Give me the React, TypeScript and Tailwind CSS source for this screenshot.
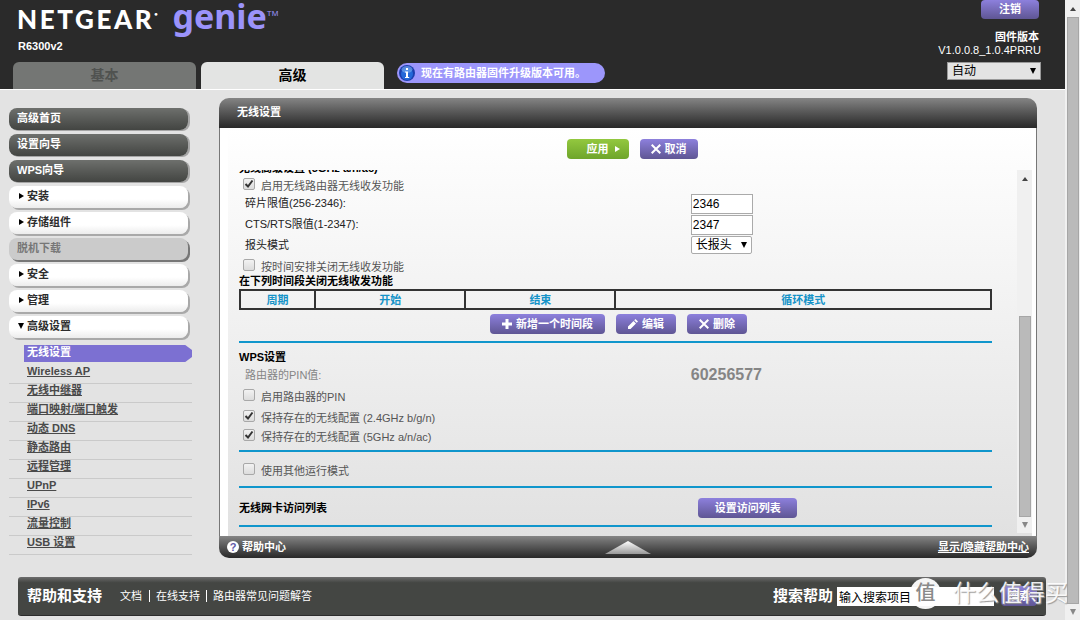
import { useState } from 'react'
import type { ReactNode } from 'react'
import clsx from 'clsx'

type MenuItem = {
  label: string
  kind: 'main' | 'group' | 'disabled'
  open?: boolean
}

const MENU: MenuItem[] = [
  { label: '高级首页', kind: 'main' },
  { label: '设置向导', kind: 'main' },
  { label: 'WPS向导', kind: 'main' },
  { label: '安装', kind: 'group' },
  { label: '存储组件', kind: 'group' },
  { label: '脱机下载', kind: 'disabled' },
  { label: '安全', kind: 'group' },
  { label: '管理', kind: 'group' },
  { label: '高级设置', kind: 'group', open: true },
]

const SUBMENU = [
  'Wireless AP',
  '无线中继器',
  '端口映射/端口触发',
  '动态 DNS',
  '静态路由',
  '远程管理',
  'UPnP',
  'IPv6',
  '流量控制',
  'USB 设置',
]

function Triangle({ dir, className }: { dir: 'up' | 'down' | 'right'; className?: string }) {
  const points = { up: '1,6 4,2 7,6', down: '1,1 7,1 4,7', right: '2,1 7,4 2,7' }[dir]
  return (
    <svg viewBox="0 0 8 8" className={clsx('size-2 shrink-0 fill-current', className)} aria-hidden="true">
      <polygon points={points} />
    </svg>
  )
}

function PurpleButton({ className, children }: { className?: string; children: ReactNode }) {
  return (
    <button
      type="button"
      className={clsx(
        'flex h-5 items-center justify-center gap-1 rounded-[4px] bg-gradient-to-b from-[#8d80dd] to-[#5f5694] font-bold whitespace-nowrap text-white',
        className,
      )}
    >
      {children}
    </button>
  )
}

function CrossIcon() {
  return (
    <svg viewBox="0 0 10 10" className="size-2.5" fill="none" stroke="currentColor" strokeWidth="2" aria-hidden="true">
      <path d="M.7.7 9.300 9.300M9.300.7.7 9.300" />
    </svg>
  )
}

function CheckRow({ label, defaultChecked, className }: { label: string; defaultChecked?: boolean; className?: string }) {
  return (
    <label className={clsx('flex gap-1.5 pl-1', className)}>
      <span className="relative block size-3 shrink-0">
        <input
          type="checkbox"
          defaultChecked={defaultChecked}
          className="peer block size-3 appearance-none rounded-xs border border-[#a8a8a8] bg-gradient-to-b from-[#f2f2f2] to-[#dcdcdc]"
        />
        <svg
          viewBox="0 0 12 12"
          className="pointer-events-none absolute inset-0 hidden size-3 peer-checked:block"
          fill="none"
          stroke="#333"
          strokeWidth="2"
          aria-hidden="true"
        >
          <path d="M2.500 6 5 8.500 9.500 2.500" />
        </svg>
      </span>
      <span className="pt-0.5 leading-3">{label}</span>
    </label>
  )
}

function Divider() {
  return <hr className="h-0.5 border-0 bg-[#1096cc]" />
}

function ScrollTrack({ thumb }: { thumb: string }) {
  return (
    <div className="flex w-[15px] shrink-0 flex-col items-center bg-[#f0f0f0]" aria-hidden="true">
      <div className="flex h-[17px] items-center text-[#444]">
        <Triangle dir="up" />
      </div>
      <div className="flex w-full flex-1 flex-col items-center">
        <div className={clsx('w-3 border border-[#a6a6a6] bg-[#bababa]', thumb)} />
      </div>
      <div className="flex h-4 items-center text-[#888]">
        <Triangle dir="down" />
      </div>
    </div>
  )
}

function Header() {
  const [tab, setTab] = useState('高级')

  return (
    <header className="flex justify-between border-b border-white bg-[#2a2a2a] pr-6 pl-[13px] text-white">
      <div>
        <div className="flex h-9 items-start pl-1">
          <span className="mr-3 pt-1 font-['Lato'] text-[26px] leading-[30px] font-black tracking-widest">
            NETGEAR<sup className="align-super text-[6px] leading-none">•</sup>
          </span>
          <span className="font-['Noto_Sans'] text-[34px] leading-[32px] font-bold text-[#9b93fb]">genie</span>
          <span className="pt-2 text-[8px] leading-3 text-[#9b93fb]">TM</span>
        </div>
        <div className="h-[26px] pt-1 pl-[5px] leading-3 font-bold">R6300v2</div>
        <div className="flex">
          <nav className="flex gap-[5px]">
            {['基本', '高级'].map((name) => (
              <button
                key={name}
                type="button"
                onClick={() => setTab(name)}
                className={clsx(
                  'h-[27px] w-[183px] rounded-t-md text-[14px] font-bold',
                  tab === name ? 'bg-[#e3e4e3] text-black' : 'bg-[#747674] text-[#505250]',
                )}
              >
                {name}
              </button>
            ))}
          </nav>
          <a
            href="#upgrade"
            className="mt-px ml-[13px] flex h-5 w-[208px] items-center gap-1.5 rounded-full bg-[#9c96fb] pl-0.5 font-bold"
          >
            <svg viewBox="0 0 16 16" className="size-4" aria-hidden="true">
              <circle cx="8" cy="8" r="8" fill="#1b3fae" />
              <circle cx="8" cy="9" r="6" fill="#2468d8" />
              <ellipse cx="8" cy="4.500" rx="5.500" ry="3.500" fill="#6fa4ee" opacity=".7" />
              <path d="M7 3h2v2H7zM6 6.500h3V12h1.200v1H6v-1h1V7.500H6z" fill="#fff" />
            </svg>
            现在有路由器固件升级版本可用。
          </a>
        </div>
      </div>

      <div className="flex flex-col items-end">
        <PurpleButton className="mr-0.5 h-[19px] w-[58px]">注销</PurpleButton>
        <div className="mt-3 mr-0.5 leading-[13px] font-bold">固件版本</div>
        <div className="leading-[13px]">V1.0.0.8_1.0.4PRRU</div>
        <div className="relative mt-[5px]">
          <select
            aria-label="语言"
            className="block h-[18px] w-[94px] appearance-none border border-[#999] bg-[#e3e3e3] px-1 text-[12px] leading-4 text-black"
          >
            <option>自动</option>
          </select>
          <Triangle dir="down" className="pointer-events-none absolute top-[5px] right-1 text-black" />
        </div>
      </div>
    </header>
  )
}

function Sidebar() {
  return (
    <aside className="w-[183px] shrink-0 pt-2.5">
      <ul className="flex flex-col gap-1">
        {MENU.map((item) => (
          <li key={item.label} className="pr-1">
            <a
              href="#menu"
              className={clsx(
                'flex h-[22px] items-center rounded-lg pb-0.5 font-bold',
                item.kind === 'main' &&
                  'bg-gradient-to-b from-[#6e706d] to-[#434542] pl-2 text-white shadow-[2px_1px_0_#a5a5a5]',
                item.kind === 'group' &&
                  'gap-0.5 bg-gradient-to-b from-white from-60% to-[#ececec] pl-2 text-[#2d2d2d] shadow-[2px_2px_0_#a9a9a9]',
                item.kind === 'disabled' && 'bg-[#cbcbcb] pl-2 text-[#777] shadow-[2px_2px_0_#777]',
              )}
            >
              {item.kind === 'group' && <Triangle dir={item.open ? 'down' : 'right'} className="text-black" />}
              {item.label}
            </a>
          </li>
        ))}
      </ul>
      <ul className="pt-[7px]">
        <li className="mb-[3px] pl-[15px]">
          <a
            href="#wireless"
            className="block h-[17px] bg-[#7c70d2] pl-[3px] leading-[14px] font-bold text-white [clip-path:polygon(0_0,96%_0,100%_30%,100%_70%,96%_100%,0_100%)]"
          >
            无线设置
          </a>
        </li>
        {SUBMENU.map((label) => (
          <li key={label} className="h-[19px] border-b border-[#cacaca] pl-[18px] leading-3 font-bold text-[#4a4a4a]">
            <a href="#submenu" className="underline">
              {label}
            </a>
          </li>
        ))}
      </ul>
    </aside>
  )
}

function WirelessForm() {
  return (
    <div className="min-w-0 flex-1 pr-[25px] pb-1.5 pl-[3px]">
      <h3 className="-mt-2.5 h-4 leading-4 font-bold text-black">无线高级设置 (5GHz a/n/ac)</h3>
      <CheckRow label="启用无线路由器无线收发功能" defaultChecked className="h-[18px] pt-0.5" />
      <div className="grid grid-cols-[60%_1fr] text-[#222]">
        <label htmlFor="frag" className="pl-1.5 leading-[19px]">
          碎片限值(256-2346):
        </label>
        <div className="h-[21px]">
          <input
            id="frag"
            defaultValue="2346"
            className="block h-5 w-[62px] border border-[#aaa] bg-white px-px text-[12px] text-black"
          />
        </div>
        <label htmlFor="rts" className="pl-1.5 leading-[19px]">
          CTS/RTS限值(1-2347):
        </label>
        <div className="h-[21px]">
          <input
            id="rts"
            defaultValue="2347"
            className="block h-5 w-[62px] border border-[#aaa] bg-white px-px text-[12px] text-black"
          />
        </div>
        <label htmlFor="preamble" className="pl-1.5 leading-[19px]">
          报头模式
        </label>
        <div className="relative h-[21px] w-[61px]">
          <select
            id="preamble"
            className="block h-[18px] w-full appearance-none rounded-xs border border-[#aaa] bg-white px-1 text-[12px] leading-4 text-black"
          >
            <option>长报头</option>
          </select>
          <Triangle dir="down" className="pointer-events-none absolute top-[5px] right-1 text-black" />
        </div>
      </div>
      <CheckRow label="按时间安排关闭无线收发功能" className="h-[18px] pt-0.5" />
      <h3 className="h-3.5 leading-3 font-bold text-black">在下列时间段关闭无线收发功能</h3>

      <table className="w-full table-fixed border-collapse border-2 border-[#333]">
        <thead>
          <tr className="h-[19px] leading-4 text-[#1593c8]">
            <th className="w-[10%] border-2 border-[#333]">周期</th>
            <th className="w-[20%] border-2 border-[#333]">开始</th>
            <th className="w-[20%] border-2 border-[#333]">结束</th>
            <th className="border-2 border-[#333]">循环模式</th>
          </tr>
        </thead>
      </table>
      <div className="flex justify-center gap-[11px] pt-1 pb-[7px] pl-1.5">
        <PurpleButton className="w-[115px]">
          <svg viewBox="0 0 10 10" className="size-2.5" fill="currentColor" aria-hidden="true">
            <path d="M3.500 0h3v3.500H10v3H6.500V10h-3V6.500H0v-3h3.500z" />
          </svg>
          新增一个时间段
        </PurpleButton>
        <PurpleButton className="w-[60px]">
          <svg viewBox="0 0 10 10" className="size-2.5" fill="currentColor" aria-hidden="true">
            <path d="M0 10V7.500L5.500 2 8 4.500 2.500 10zM6.200 1.300 7.500 0 10 2.500 8.700 3.800z" />
          </svg>
          编辑
        </PurpleButton>
        <PurpleButton className="w-[60px]">
          <CrossIcon />
          删除
        </PurpleButton>
      </div>
      <Divider />

      <h3 className="pt-1.5 leading-4 font-bold text-black">WPS设置</h3>
      <div className="grid grid-cols-[60%_1fr] leading-5 text-[#858585]">
        <span className="pl-1.5">路由器的PIN值:</span>
        <span className="text-[16px] font-bold">60256577</span>
      </div>
      <CheckRow label="启用路由器的PIN" className="h-[25px] pt-1" />
      <CheckRow label="保持存在的无线配置 (2.4GHz b/g/n)" defaultChecked className="h-[19px]" />
      <CheckRow label="保持存在的无线配置 (5GHz a/n/ac)" defaultChecked className="h-[21px]" />
      <Divider />
      <CheckRow label="使用其他运行模式" className="h-[34px] pt-[11px]" />
      <Divider />
      <div className="grid h-[37px] grid-cols-[61%_1fr] pt-2.5">
        <h3 className="leading-5 font-bold text-black">无线网卡访问列表</h3>
        <PurpleButton className="w-[99px]">设置访问列表</PurpleButton>
      </div>
      <Divider />
    </div>
  )
}

function Panel() {
  return (
    <main className="flex min-w-0 flex-1 flex-col">
      <h2 className="h-[30px] rounded-t-[10px] bg-gradient-to-b from-[#858585] to-[#292929] pl-[18px] leading-[29px] font-bold text-white">
        无线设置
      </h2>
      <div className="border-x border-[#777] bg-white px-1 pl-2">
        <div className="bg-gradient-to-b from-white to-[#e1e1e1] pl-2">
          <div className="flex h-[42px] items-start justify-center gap-[11px] pt-[11px] pr-1">
            <button
              type="button"
              className="flex h-5 w-[62px] items-center justify-center gap-1 rounded-[4px] bg-gradient-to-b from-[#93c83f] to-[#6ea52a] pl-3 font-bold text-white"
            >
              应用
              <Triangle dir="right" />
            </button>
            <PurpleButton className="w-[58px]">
              <CrossIcon />
              取消
            </PurpleButton>
          </div>
          <div className="flex overflow-hidden pb-[3px]">
            <WirelessForm />
            <ScrollTrack thumb="mt-auto h-[61%]" />
          </div>
        </div>
      </div>
      <div className="grid h-[22px] grid-cols-3 items-center rounded-b-[10px] bg-gradient-to-b from-[#858585] to-[#292929] px-2 font-bold text-white">
        <a href="#help" className="flex items-center gap-[3px]">
          <span className="flex size-3 items-center justify-center rounded-full bg-white text-[11px] leading-3 text-[#5f5aa8]">
            ?
          </span>
          帮助中心
        </a>
        <svg viewBox="0 0 46 13" className="h-[13px] w-[46px] justify-self-center" aria-hidden="true">
          <defs>
            <linearGradient id="arrow" x1="0" y1="0" x2="0" y2="1">
              <stop offset="0" stopColor="#fff" />
              <stop offset="1" stopColor="#999" />
            </linearGradient>
          </defs>
          <polygon points="0,13 23,0 46,13" fill="url(#arrow)" />
        </svg>
        <a href="#toggle-help" className="justify-self-end underline">
          显示/隐藏帮助中心
        </a>
      </div>
    </main>
  )
}

function Footer() {
  return (
    <footer className="relative mt-[19px] mr-[19px] mb-1 ml-[18px] flex h-[39px] items-center rounded-[3px] border-b border-[#2c2c2c] bg-gradient-to-b from-[#6d6d6d] to-[#444643] to-15% px-[9px] text-white">
      <h2 className="mr-[18px] text-[15px] font-bold">帮助和支持</h2>
      <a href="#docs" className="border-r border-white pr-[7px] leading-3">
        文档
      </a>
      <a href="#support" className="border-r border-white px-[6px] leading-3">
        在线支持
      </a>
      <a href="#faq" className="px-[6px] leading-3">
        路由器常见问题解答
      </a>
      <label htmlFor="search" className="mr-1 ml-auto text-[15px] font-bold">
        搜索帮助
      </label>
      <input
        id="search"
        defaultValue="输入搜索项目"
        className="h-[19px] w-[157px] bg-white px-0.5 text-[12px] text-black"
      />
      <PurpleButton className="ml-[7px] w-9">搜索</PurpleButton>

      {/* site stamp */}
      <div className="pointer-events-none absolute top-0 -right-[22px] flex h-8 items-center gap-3 whitespace-nowrap">
        <span className="flex size-[31px] items-center justify-center rounded-full bg-white/95 text-[20px] leading-none font-medium text-[#8a8a8a]">
          值
        </span>
        <span className="text-[23px] leading-none text-white/90 [text-shadow:1px_1px_1px_#999]">什么值得买</span>
      </div>
    </footer>
  )
}

export default function App() {
  return (
    <div className="flex min-h-screen overflow-hidden bg-[#e3e3e3] font-['Liberation_Sans','Noto_Sans_CJK_SC',sans-serif] text-[11px] text-[#555]">
      <div className="min-w-0 flex-1">
        <Header />
        <div className="flex gap-[27px] pt-2 pr-7 pl-[9px]">
          <Sidebar />
          <Panel />
        </div>
        <Footer />
      </div>
      <ScrollTrack thumb="flex-1" />
    </div>
  )
}
